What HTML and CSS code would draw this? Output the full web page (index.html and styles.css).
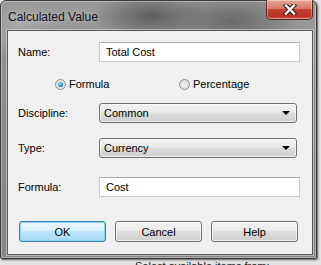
FILE: index.html
```html
<!DOCTYPE html>
<html lang="en">
<head>
  <meta charset="UTF-8">
  <title>Calculated Value</title>
  <link rel="stylesheet" href="styles.css">
</head>
<body>
<div class="window">
  <div class="titlebar">
    <span class="title">Calculated Value</span>
    <div class="close">
      <svg width="18" height="11" viewBox="0 0 18 11">
        <path d="M5 1.5 L13 9.5 M13 1.5 L5 9.5" stroke="#3a1a14" stroke-width="4.4" stroke-linecap="square"/>
        <path d="M5 1.5 L13 9.5 M13 1.5 L5 9.5" stroke="#fff" stroke-width="2.4" stroke-linecap="square"/>
      </svg>
    </div>
  </div>
  <div class="client">
    <div class="row first">
      <label>Name:</label>
      <div class="textbox">Total Cost</div>
    </div>
    <div class="radios">
      <span class="radio on"><i></i>Formula</span>
      <span class="radio"><i></i>Percentage</span>
    </div>
    <div class="row gap12">
      <label>Discipline:</label>
      <div class="combo">Common<b></b></div>
    </div>
    <div class="row gap15">
      <label>Type:</label>
      <div class="combo">Currency<b></b></div>
    </div>
    <div class="row gap19">
      <label>Formula:</label>
      <div class="textbox">Cost</div>
    </div>
    <div class="buttons">
      <button class="default">OK</button>
      <button>Cancel</button>
      <button>Help</button>
    </div>
  </div>
</div>
<div class="behind">Select available items from:</div>
</body>
</html>
```

FILE: styles.css
```css
html, body { margin: 0; height: 100%; overflow: hidden; }
body { background: #e4e4e4; font-family: 'Liberation Sans', Arial, sans-serif; font-size: 11px; color: #000; }

.window {
  width: 313px; height: 255px; border: 1px solid #3a3a3a; border-radius: 6px 6px 2px 2px;
  background:
    radial-gradient(ellipse 60px 25px at 150px 15px, #5e5e5e, transparent),
    radial-gradient(ellipse 70px 30px at 230px 20px, #6a6a6a, transparent),
    radial-gradient(ellipse 40px 30px at 20px 30px, #a8a8a8, transparent),
    linear-gradient(#9a9a9a, #8a8a8a 40%, #858585);
  box-shadow: 1px 1px 2px rgba(0,0,0,.6), inset 0 0 0 1px rgba(255,255,255,.35);
  display: flex; flex-direction: column; padding: 0 3px 3px 6px; box-sizing: content-box;
  width: 306px; height: 254px;
}
.titlebar { height: 29px; display: flex; align-items: flex-start; position: relative; }
.title { font-size: 12px; margin: 9px 0 0 1px; color: #101020; text-shadow: 0 0 6px rgba(255,255,255,.7); }
.close {
  position: absolute; right: 0; top: -1px; width: 45px; height: 19px;
  border: 1px solid #5a2a22; border-top: none; border-radius: 0 0 5px 5px;
  background: linear-gradient(#e8a898, #d47868 45%, #c24432 50%, #b83222 85%, #d0604c);
  display: flex; align-items: center; justify-content: center;
  box-shadow: inset 0 0 0 1px rgba(255,255,255,.35);
}
.client {
  flex: 1; background: #f0f0f0; border: 1px solid #5a5a5a;
  box-shadow: 0 0 0 1px rgba(255,255,255,.4);
  display: flex; flex-direction: column; padding: 0 9px 0 10px;
}
.row { display: flex; align-items: center; height: 20px; }
.row label { width: 81px; }
.first { margin-top: 11px; }
.gap12 { margin-top: 12px; }
.gap15 { margin-top: 15px; }
.gap19 { margin-top: 19px; }
.textbox {
  width: 193px; height: 18px; line-height: 18px; padding-left: 6px; background: #fff;
  border: 1px solid #c6c9cf; border-top-color: #abadb3;
}
.combo {
  width: 192px; height: 18px; line-height: 18px; padding-left: 4px; position: relative;
  border: 1px solid #707070; border-radius: 3px;
  background: linear-gradient(#f2f2f2, #ebebeb 45%, #dddddd 50%, #cfcfcf);
  box-shadow: inset 0 0 0 1px rgba(255,255,255,.6);
}
.combo b {
  position: absolute; right: 6px; top: 7px; width: 0; height: 0;
  border-left: 4px solid transparent; border-right: 4px solid transparent; border-top: 4px solid #000;
}
.radios { display: flex; margin-top: 15px; height: 14px; align-items: center; padding-left: 37px; }
.radio { display: flex; align-items: center; width: 129px; }
.radio i {
  width: 11px; height: 11px; border-radius: 50%; border: 1px solid #8e8f8f; margin-right: 3px;
  background: radial-gradient(circle, #f4f4f4, #d4d4d4); box-sizing: border-box; position: relative;
}
.radio.on i::after {
  content: ""; position: absolute; left: 2px; top: 2px; width: 5px; height: 5px; border-radius: 50%;
  background: radial-gradient(circle at 40% 35%, #aee4ff, #1e7fc4 60%, #0d5a96);
}
.buttons { display: flex; gap: 9px; margin-top: 24px; padding-left: 1px; }
.buttons button {
  width: 87px; height: 21px; font: inherit; padding: 0; color: #000;
  border: 1px solid #707070; border-radius: 3px;
  background: linear-gradient(#f2f2f2, #ebebeb 45%, #dddddd 50%, #cfcfcf);
  box-shadow: inset 0 0 0 1px rgba(255,255,255,.7);
}
.buttons button.default {
  border-color: #3c7fb1;
  background: linear-gradient(#eaf6fd, #d9f0fc 45%, #bee6fd 50%, #a7d9f5);
  box-shadow: inset 0 0 0 1px #8fd3f6;
}
.behind { padding: 1px 0 0 135px; font-size: 11px; color: #222; }
```
